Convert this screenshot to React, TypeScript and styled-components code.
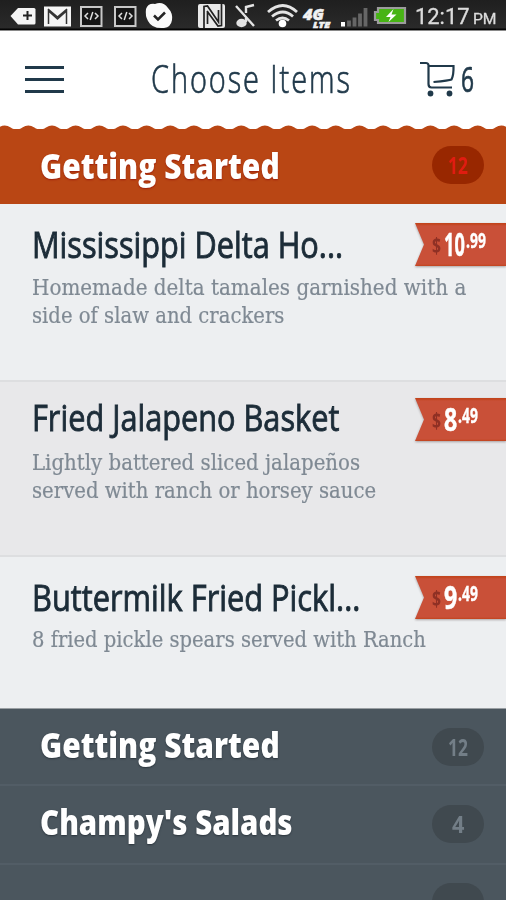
import React, { useLayoutEffect, useRef, useState } from "react";
import styled, { createGlobalStyle, css } from "styled-components";

const Global = createGlobalStyle`
  *, *::before, *::after { box-sizing: border-box; }
  body { margin: 0; background: #4b555d; overflow: hidden; }
`;

const sans = `"Open Sans", "Noto Sans", sans-serif`;

const Screen = styled.main`
  width: 506px;
  height: 900px;
  overflow: hidden;
  display: flex;
  flex-direction: column;
  background: #4b555d;
  font-family: ${sans};
`;

const FitBox = styled.span<{ $w: number }>`
  display: block;
  flex: none;
  width: ${(p) => p.$w}px;
  white-space: nowrap;
`;
const FitInner = styled.span`
  display: inline-block;
  transform-origin: 0 50%;
  white-space: pre;
`;

/* Condenses a single line of text to the given width. */
function Fit({ w, children }: { w: number; children: string }) {
  const ref = useRef<HTMLSpanElement>(null);
  const [k, setK] = useState(1);
  useLayoutEffect(() => {
    if (ref.current) setK(w / ref.current.offsetWidth);
  }, [w, children]);
  return (
    <FitBox $w={w}>
      <FitInner ref={ref} style={{ transform: `scaleX(${k})` }}>{children}</FitInner>
    </FitBox>
  );
}

const StatusBar = styled.header`
  flex: none;
  height: 31px;
  background: linear-gradient(#1f1f1f, #2a2a2a 28px, #050505 29px, #050505 30px, #8a8a8a 30px);
`;
const StatusRow = styled.div`
  display: flex;
  height: 30px;
  align-items: center;
`;
const StatusIcons = styled.svg`
  display: block;
  flex: none;
`;
const Clock = styled.div`
  display: flex;
  align-items: baseline;
  gap: 3px;
  height: 30px;
  color: #dcdcdc;
  font: 400 21.5px/34px Roboto, sans-serif;
  -webkit-text-stroke: 0.3px #dcdcdc;
  small { font-size: 15px; }
`;

const Header = styled.div`
  flex: none;
  height: 94px;
  display: flex;
  align-items: flex-start;
  background: #fff;
  color: #20394a;
`;
const MenuButton = styled.button`
  all: unset;
  display: flex;
  flex-direction: column;
  gap: 9px;
  width: 39px;
  margin: 34.5px 0 0 25px;
`;
const MenuLine = styled.span`
  height: 3px;
  background: #20394a;
`;
const PageTitle = styled.h1`
  margin: 23px 0 0 87px;
  font-size: 39px;
  line-height: 48px;
  font-weight: 300;
  letter-spacing: 2.6px;
  -webkit-text-stroke: 0.7px #20394a;
`;
const CartButton = styled.div`
  display: flex;
  margin: 30px 0 0 68px;
  font-size: 35px;
  line-height: 36px;
  -webkit-text-stroke: 0.7px #20394a;
`;
const CartSvg = styled.svg`
  display: block;
  margin-right: 5px;
`;

const Scallops = styled.svg`
  display: block;
  flex: none;
`;

const SectionRow = styled.section<{ $active?: boolean; $h: number; $top: number }>`
  flex: none;
  height: ${(p) => p.$h}px;
  padding: ${(p) => p.$top}px 22.5px 0 40px;
  display: flex;
  align-items: flex-start;
  justify-content: space-between;
  color: #fff;
  background: ${(p) => (p.$active ? "#b94614" : "#4b565e")};
  ${(p) => !p.$active && css`border-bottom: 2px solid #525d66;`}
`;
const SectionTitle = styled.h2<{ $active?: boolean }>`
  margin: ${(p) => (p.$active ? 0 : -3)}px 0 0;
  font-size: 36px;
  line-height: 39px;
  font-weight: 800;
  text-shadow: 0 1px 2px ${(p) => (p.$active ? "#9b1d0c" : "#2a343c")};
`;
const Pill = styled.span<{ $active?: boolean }>`
  display: flex;
  justify-content: center;
  width: 52px;
  height: 38px;
  border-radius: 19px;
  font-size: 23.5px;
  line-height: 38px;
  font-weight: 700;
  background: ${(p) => (p.$active ? "#982700" : "#40494f")};
  color: ${(p) => (p.$active ? "#e01c10" : "#737e87")};
`;

const Item = styled.article<{ $h: number; $top: number; $alt?: boolean; $last?: boolean }>`
  flex: none;
  height: ${(p) => p.$h}px;
  padding: ${(p) => p.$top}px 0 0 32px;
  display: flex;
  align-items: flex-start;
  justify-content: space-between;
  background: ${(p) => (p.$alt ? "#e8e8ea" : "#edeff1")};
  border-bottom: ${(p) => (p.$last ? "1px solid #9a9fa3" : "2px solid #dddee0")};
`;
const ItemText = styled.div<{ $dy: number }>`
  width: 383px;
  margin-top: ${(p) => p.$dy}px;
`;
const ItemTitle = styled.h3`
  margin: 0;
  font-size: 36.5px;
  line-height: 42px;
  font-weight: 400;
  color: #1c2c38;
  -webkit-text-stroke: 0.9px #1c2c38;
`;
const ItemDesc = styled.div<{ $gap: number }>`
  margin-top: ${(p) => p.$gap}px;
  font: 400 21.5px/27.6px "DejaVu Serif", serif;
  color: #7f8993;
  -webkit-text-stroke: 0.2px #7f8993;
`;
const RibbonShadow = styled.div`
  flex: none;
  filter: drop-shadow(0 1px 1px rgba(90, 70, 70, 0.45));
`;
const Ribbon = styled.div`
  width: 91px;
  height: 43px;
  padding-left: 17px;
  display: flex;
  align-items: flex-start;
  color: #fff;
  font-weight: 700;
  background: linear-gradient(#c2441d 1px, #c95038 3px, #c95038 41px, #c2441d 43px);
  clip-path: polygon(0 0, 100% 0, 100% 100%, 0 100%, 9px 50%);
`;
const Dollar = styled.span`
  margin-right: 3px;
  font-size: 21px;
  line-height: 44px;
  font-weight: 700;
  color: #8f3024;
`;
const Whole = styled.span`
  font-size: 32px;
  line-height: 42px;
  -webkit-text-stroke: 0.5px #fff;
`;
const Cents = styled.span`
  margin-left: 1px;
  font-size: 21.5px;
  line-height: 33px;
  -webkit-text-stroke: 0.4px #fff;
`;

type MenuItem = {
  title: string; titleW: number; lines: [string, number][];
  whole: string; wholeW: number; cents: string;
  h: number; top: number; dy: number; gap: number; alt?: boolean; last?: boolean;
};
const items: MenuItem[] = [
  { title: "Mississippi Delta Ho...", titleW: 311, lines: [["Homemade delta tamales garnished with a", 434], ["side of slaw and crackers", 252]], whole: "10", wholeW: 21, cents: ".99", h: 178, top: 19, dy: 0, gap: 9 },
  { title: "Fried Jalapeno Basket", titleW: 307, lines: [["Lightly battered sliced jalapeños", 328], ["served with ranch or horsey sauce", 344]], whole: "8", wholeW: 13, cents: ".49", h: 175, top: 16, dy: -2, gap: 11, alt: true },
  { title: "Buttermilk Fried Pickl...", titleW: 328, lines: [["8 fried pickle spears served with Ranch", 394]], whole: "9", wholeW: 13, cents: ".49", h: 152, top: 19, dy: 0, gap: 8, last: true },
];

const bumps = Array.from({ length: 23 }, (_, i) => {
  const c = 4.7 + i * 23.65;
  return `L${c - 9} 4 Q${c - 7.5} 4 ${c - 6} 2.6 Q${c} -1.8 ${c + 6} 2.6 Q${c + 7.5} 4 ${c + 9} 4`;
}).join(" ");

export default function App() {
  return (
    <>
      <Global />
      <Screen>
        <StatusBar>
          <StatusRow>
            <StatusIcons width="415" height="30" viewBox="0 0 415 30">
              <path d="M10.5 16 18 8H34q1.500 0 1.500 1.500V23q0 1.500-1.500 1.500H18Z" fill="#f4f4f4" />
              <path d="M27.500 11v9M23 15.500h9" stroke="#222" strokeWidth="2" />
              <rect x="44" y="6.500" width="27" height="20" fill="#f4f4f4" />
              <path d="M48.500 24V11l9 8 9-8v13M48 9l9.500 8L67 9" fill="none" stroke="#333" strokeWidth="1.500" />
              {[80, 114].map((x) => (
                <g key={x} transform={`translate(${x} 6)`}>
                  <rect x="1" y="1" width="20.500" height="19" fill="#151515" stroke="#c8c8c8" strokeWidth="2" />
                  <path d="m8 7-3 3 3 3M15 7l3 3-3 3M12.800 6l-2.600 8" fill="none" stroke="#ddd" strokeWidth="1.500" />
                </g>
              ))}
              <path d="M146 9q2-6 9-5 8-3 13 4 5 5 4 12-1 7-8 8-12 1-16-7-3-5-2-12Z" fill="#fafafa" />
              <path d="m154 15.500 4 4 7-7" fill="none" stroke="#222" strokeWidth="2.500" />
              <rect x="198" y="4" width="27" height="24" rx="2" fill="#e9e9e9" />
              <path d="M204 28V6.500l3.500-.5 11 16V10M207.500 11v13M221.500 4v21.500l-3.500.5-11-15" fill="none" stroke="#222" strokeWidth="1.700" />
              <g fill="none" stroke="#e4e4e4" strokeWidth="2.400">
                <path d="m236 6 18 20M246 13V7l8-2M246 18v4" />
                <ellipse cx="241.500" cy="23" rx="4" ry="3" fill="#e4e4e4" />
                <path d="M268 12q15-13 29 0M272 16.500q11-9 21 0M276 20.500q6.500-5 13 0" strokeWidth="2.800" />
              </g>
              <circle cx="282.500" cy="23.500" r="3.800" fill="#fff" />
              <g fill="#f2f2f2" stroke="#f2f2f2" strokeWidth="0.500" fontFamily="Open Sans, sans-serif" fontWeight="800" fontStyle="italic">
                <text x="303" y="20" fontSize="15" textLength="21" lengthAdjust="spacingAndGlyphs">4G</text>
                <text x="313" y="27.500" fontSize="8" textLength="17" lengthAdjust="spacingAndGlyphs">LTE</text>
              </g>
              <rect x="341" y="22" width="4" height="4.500" fill="#fff" />
              <path d="M349 26.500v-6M354.500 26.500v-9M360 26.500v-13M365.500 26.500V8" stroke="#666" strokeWidth="3.800" />
              <path d="M378 8h27v15h-27v-3h-3v-8h3Z" fill="#47b414" stroke="#9c9c9c" strokeWidth="2.200" />
              <path d="m393.500 9-7.500 8h4.500l-2 5 8-7.500h-5Z" fill="#fff" />
            </StatusIcons>
            <Clock><Fit w={55}>12:17</Fit><small><Fit w={24}>PM</Fit></small></Clock>
          </StatusRow>
        </StatusBar>
        <Header>
          <MenuButton aria-label="Menu"><MenuLine /><MenuLine /><MenuLine /></MenuButton>
          <PageTitle><Fit w={201}>Choose Items</Fit></PageTitle>
          <CartButton>
            <CartSvg width="36" height="36" viewBox="0 0 36 36" fill="none" stroke="#20394a" strokeWidth="2.200">
              <path d="M0 2h6q2 0 2.500 2v19q0 3.500 3 3.500h20.500M8 5h25.500q.3 9-2 13.500-2 1-18 2.500" />
              <circle cx="10.500" cy="32.500" r="2.900" fill="#20394a" stroke="none" />
              <circle cx="29.500" cy="32.500" r="2.900" fill="#20394a" stroke="none" />
            </CartSvg>
            <Fit w={13}>6</Fit>
          </CartButton>
        </Header>
        <Scallops width="506" height="4" viewBox="0 0 506 4">
          <rect width="506" height="4" fill="#fff" />
          <path d={`M-10 4 ${bumps} Z`} fill="#b94614" />
        </Scallops>
        <SectionRow $active $h={75} $top={17}>
          <SectionTitle $active><Fit w={240}>Getting Started</Fit></SectionTitle>
          <Pill $active><Fit w={20}>12</Fit></Pill>
        </SectionRow>
        {items.map((it) => (
          <Item key={it.title} $h={it.h} $top={it.top} $alt={it.alt} $last={it.last}>
            <ItemText $dy={it.dy}>
              <ItemTitle><Fit w={it.titleW}>{it.title}</Fit></ItemTitle>
              <ItemDesc $gap={it.gap}>
                {it.lines.map(([t, w]) => <Fit key={t} w={w}>{t}</Fit>)}
              </ItemDesc>
            </ItemText>
            <RibbonShadow>
              <Ribbon>
                <Dollar><Fit w={9}>$</Fit></Dollar>
                <Whole><Fit w={it.wholeW}>{it.whole}</Fit></Whole>
                <Cents><Fit w={20}>{it.cents}</Fit></Cents>
              </Ribbon>
            </RibbonShadow>
          </Item>
        ))}
        <SectionRow $h={77} $top={19}>
          <SectionTitle><Fit w={240}>Getting Started</Fit></SectionTitle>
          <Pill><Fit w={20}>12</Fit></Pill>
        </SectionRow>
        <SectionRow $h={79} $top={19}>
          <SectionTitle><Fit w={253}>Champy's Salads</Fit></SectionTitle>
          <Pill><Fit w={12}>4</Fit></Pill>
        </SectionRow>
        <SectionRow $h={79} $top={18}>
          <SectionTitle />
          <Pill />
        </SectionRow>
      </Screen>
    </>
  );
}
